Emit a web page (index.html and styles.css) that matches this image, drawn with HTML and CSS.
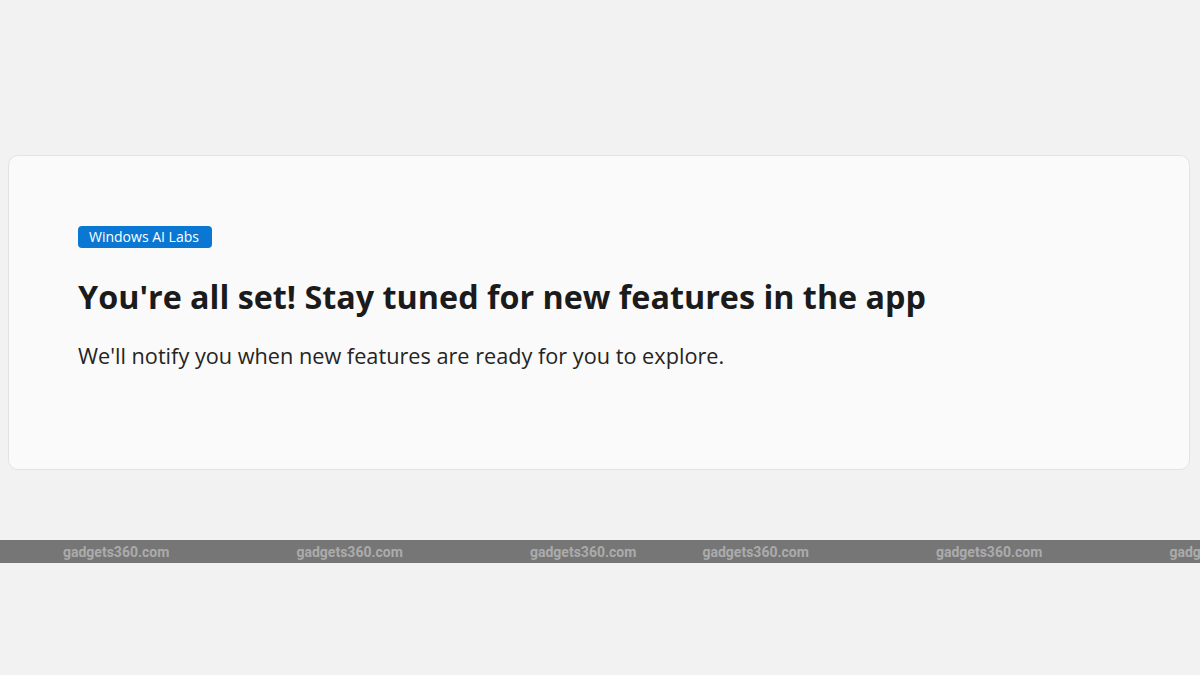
FILE: index.html
```html
<!DOCTYPE html>
<html lang="en">
<head>
    <meta charset="UTF-8">
    <meta name="viewport" content="width=device-width, initial-scale=1.0">
    <title>Windows AI Labs</title>
    <link rel="stylesheet" href="styles.css">
</head>
<body>
    <div class="page">
        <div class="card">
            <span class="badge">Windows AI Labs</span>
            <h1>You're all set! Stay tuned for new features in the app</h1>
            <p class="lead">We'll notify you when new features are ready for you to explore.</p>
        </div>
    </div>

    <div class="watermark">
        <span class="mark">gadgets360.com</span>
        <span class="mark">gadgets360.com</span>
        <span class="mark">gadgets360.com</span>
        <span class="mark near">gadgets360.com</span>
        <span class="mark">gadgets360.com</span>
        <span class="mark">gadgets360.com</span>
    </div>
</body>
</html>
```

FILE: styles.css
```css
body {
    margin: 0;
    padding: 0;
    background: #f2f2f2;
    font-family: "Open Sans", "Noto Sans", sans-serif;
    color: #1b1b1b;
    width: 1200px;
    height: 675px;
    overflow: hidden;
}

.page {
    padding: 155px 10px 0 8px;
}

.card {
    box-sizing: border-box;
    height: 315px;
    background: #fafafa;
    border: 1px solid #e3e3e3;
    border-radius: 10px;
    padding: 69px 69px 0 69px;
}

.badge {
    display: inline-block;
    background: #0a78d2;
    color: #fff;
    font-size: 14px;
    line-height: 22px;
    padding: 0 13px 0 11px;
    border-radius: 4px;
}

h1 {
    margin: 28px 0 0 0;
    font-size: 32.3px;
    line-height: 40px;
    font-weight: 700;
}

.lead {
    margin: 26px 0 0 0;
    font-size: 21.7px;
    line-height: 28px;
    color: #242424;
}

/* watermark strip */
.watermark {
    margin-top: 70px;
    height: 23px;
    background: #767676;
    display: flex;
    align-items: center;
    gap: 127.5px;
    padding-left: 63px;
    overflow: hidden;
    white-space: nowrap;
}

.mark {
    flex: none;
    width: 106px;
    font-family: Roboto, "Liberation Sans", sans-serif;
    font-weight: 700;
    font-size: 14px;
    color: #ababab;
}

.mark.near {
    margin-left: -61px;
}
```
